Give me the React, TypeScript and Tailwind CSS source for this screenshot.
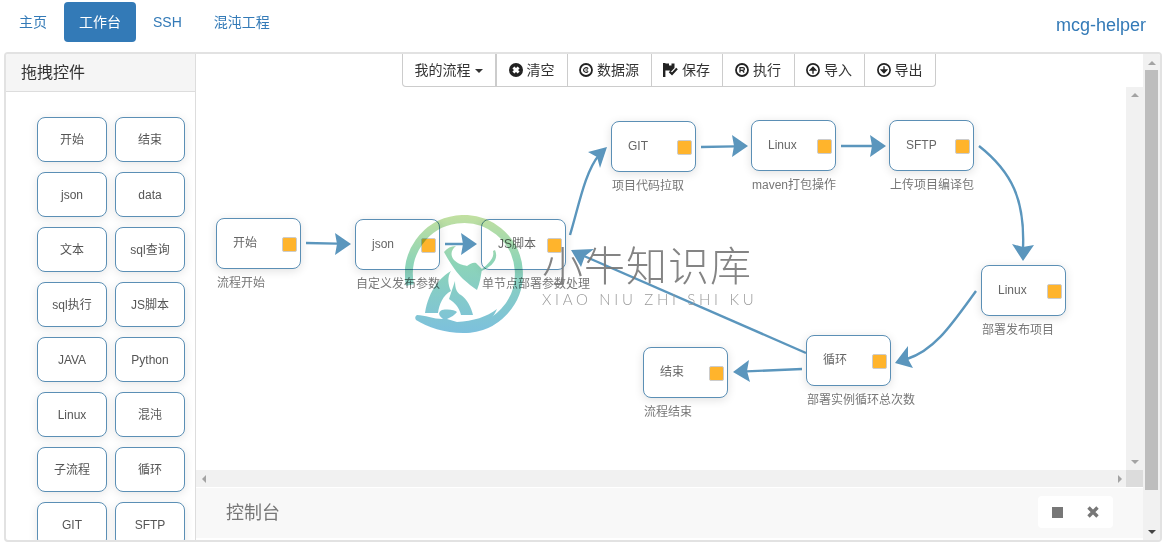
const font = "font-['Liberation_Sans','Noto_Sans_CJK_SC',sans-serif]"

const palette = [
  ["开始", "结束"],
  ["json", "data"],
  ["文本", "sql查询"],
  ["sql执行", "JS脚本"],
  ["JAVA", "Python"],
  ["Linux", "混沌"],
  ["子流程", "循环"],
  ["GIT", "SFTP"],
]

// page coordinates of the flow nodes
const nodes = [
  { x: 216, y: 218, name: "开始", label: "流程开始" },
  { x: 355, y: 219, name: "json", label: "自定义发布参数" },
  { x: 481, y: 219, name: "JS脚本", label: "单节点部署参数处理" },
  { x: 611, y: 121, name: "GIT", label: "项目代码拉取" },
  { x: 751, y: 120, name: "Linux", label: "maven打包操作" },
  { x: 889, y: 120, name: "SFTP", label: "上传项目编译包" },
  { x: 981, y: 265, name: "Linux", label: "部署发布项目" },
  { x: 806, y: 335, name: "循环", label: "部署实例循环总次数" },
  { x: 643, y: 347, name: "结束", label: "流程结束" },
]

function ClearIcon() {
  return (
    <svg width="14" height="14" viewBox="0 0 14 14">
      <circle cx="7" cy="7" r="7" fill="#222" />
      <path d="M4.4 4.4 L9.6 9.6 M9.6 4.4 L4.4 9.6" stroke="#fff" strokeWidth="2.8" />
    </svg>
  )
}

function LetterIcon({ letter }: { letter: string }) {
  return (
    <svg width="14" height="14" viewBox="0 0 14 14">
      <circle cx="7" cy="7" r="6" fill="none" stroke="#222" strokeWidth="1.8" />
      {letter === "c" ? (
        <path d="M9.2 5.6 A2.6 2.2 0 1 0 9.2 8.4 M6.5 7 H9" fill="none" stroke="#222" strokeWidth="1.2" />
      ) : (
        <path d="M5 9.6 V4.6 H8 A1.4 1.4 0 0 1 8 7.4 H5 M7.6 7.4 L9.2 9.6" fill="none" stroke="#222" strokeWidth="1.3" />
      )}
    </svg>
  )
}

function SaveIcon() {
  return (
    <svg width="15" height="14" viewBox="0 0 15 14">
      <path d="M0 0 H2.4 V14 H0 Z M2.4 0.5 H6 V2.5 H8.5 V0.5 H11.5 V5 L8 8.5 L6.5 7.5 H2.4 Z" fill="#222" />
      <path d="M6.5 8.5 L9 11 L14 5.5" fill="none" stroke="#222" strokeWidth="2.2" />
    </svg>
  )
}

function CircleArrow({ up }: { up?: boolean }) {
  return (
    <svg width="14" height="14" viewBox="0 0 14 14">
      <circle cx="7" cy="7" r="6.1" fill="none" stroke="#222" strokeWidth="1.7" />
      <path
        d={up ? "M4.4 7 L7 4.2 L9.6 7 Z M7 6 V10.8" : "M4.4 7 L7 9.8 L9.6 7 Z M7 8 V3.2"}
        fill="#222"
        stroke="#222"
        strokeWidth="1.4"
      />
    </svg>
  )
}

function ToolButton({ icon, text, w }: { icon: React.ReactNode; text: string; w: string }) {
  return (
    <div className={`flex items-center justify-center gap-1 border-l border-[#ccc] ${w}`}>
      {icon}
      <span>{text}</span>
    </div>
  )
}

function Toolbar() {
  return (
    <div className="flex h-[33px] justify-center pl-[16px] pr-[17px]">
      <div className="ml-[-1px] flex rounded-b border border-t-0 border-[#ccc] bg-white text-sm text-[#333]">
        <div className="flex w-[93px] items-center justify-center gap-1 border-r border-[#ccc]">
          我的流程
          <span className="mt-[2px] h-0 w-0 border-x-4 border-t-4 border-x-transparent border-t-[#333]" />
        </div>
        <ToolButton w="w-[71px]" icon={<ClearIcon />} text="清空" />
        <ToolButton w="w-[84px]" icon={<LetterIcon letter="c" />} text="数据源" />
        <ToolButton w="w-[71px]" icon={<SaveIcon />} text="保存" />
        <ToolButton w="w-[72px]" icon={<LetterIcon letter="r" />} text="执行" />
        <ToolButton w="w-[70px]" icon={<CircleArrow up />} text="导入" />
        <ToolButton w="w-[71px]" icon={<CircleArrow />} text="导出" />
      </div>
    </div>
  )
}

function Arrows() {
  const line = { fill: "none", stroke: "#5b96bd", strokeWidth: 2.4 }
  return (
    <svg className="absolute inset-0" width="930" height="383" viewBox="196 87 930 383">
      <g fill="#5b96bd">
        <path d="M306 243 L337 243.6" {...line} />
        <path d="M351 244 L335 233 L337 244 L335 255 Z" />
        <path d="M445 244 L465 244" {...line} />
        <path d="M477 244 L461 233 L463 244 L461 255 Z" />
        <path d="M570 235 C579 205 585 172 599 155" {...line} />
        <path d="M607 147 L588 152 L597 157 L600 168 Z" />
        <path d="M701 147 L735 146.4" {...line} />
        <path d="M748 146 L732 135 L734 146 L732 157 Z" />
        <path d="M841 146 L873 146" {...line} />
        <path d="M886 146 L870 135 L872 146 L870 157 Z" />
        <path d="M979 146 C1012 172 1025 200 1023 248" {...line} />
        <path d="M1023 261 L1034 245 L1023 247 L1012 244 Z" />
        <path d="M976 291 C952 324 935 350 907 359" {...line} />
        <path d="M895 363 L913 368 L908 359 L908 346 Z" />
        <path d="M802 369 L746 371.4" {...line} />
        <path d="M733 372 L750 382 L747 371 L749 360 Z" />
        <path d="M806 353 L584 256" {...line} />
        <path d="M571 250 L581 267 L585 256 L594 249 Z" />
      </g>
    </svg>
  )
}

function Watermark() {
  return (
    <div className="pointer-events-none absolute left-[209px] top-[128px] mix-blend-multiply">
      <svg width="120" height="120" viewBox="0 0 120 120">
        <defs>
          <linearGradient id="ring" gradientUnits="userSpaceOnUse" x1="0" y1="0" x2="0" y2="118">
            <stop offset="0" stopColor="#c2e0a0" />
            <stop offset="0.42" stopColor="#8cd4b8" />
            <stop offset="1" stopColor="#7cc0dd" />
          </linearGradient>
        </defs>
        {/* ring, open at the lower left */}
        <path d="M5 70 A55 55 0 1 1 59 114" fill="none" stroke="url(#ring)" strokeWidth="8" />
        {/* hand */}
        <path
          d="M12 100 C20 100 28 104 38 104 C33 100 33 97 37 95 C44 94 50 95 52 97 C50 100 46 102 42 104 L52 107 C68 106 82 102 92 94 C84 112 70 118 58 118 C40 118 22 112 11 105 Q9 102 12 100 Z"
          fill="url(#ring)"
        />
        {/* bull: head, body, leg, right horn */}
        <path
          d="M39 37 C42 33 46 31 51 31 C46 35 45 40 49 45 C53 49 58 50 62 51 C65 49 68 47 71 48 L77 54 C76 60 75 68 72 75 C67 72 63 68 58 64 C52 58 46 50 39 37 Z"
          fill="url(#ring)"
        />
        <path d="M46 56 C36 62 24 74 20 98 H33 C34 90 38 80 46 76 C43 70 42 62 46 56 Z" fill="url(#ring)" />
        <path d="M50 66 C50 74 52 78 56 80 C62 84 66 92 68 100 H56 C54 92 50 88 44 84 C46 78 48 72 50 66 Z" fill="url(#ring)" />
        <path d="M90 35 C94 44 88 52 72 58 C82 50 90 44 88 36 Z" fill="url(#ring)" />
      </svg>
    </div>
  )
}

function WatermarkText() {
  return (
    <div className="pointer-events-none absolute left-[346px] top-[152px] flex flex-col text-[#777]">
      <div className="whitespace-nowrap text-[41px] leading-[56px] font-light tracking-[1px] opacity-90">小牛知识库</div>
      <div className="mt-[-5px] whitespace-nowrap font-['Lato',sans-serif] text-[15px] leading-[18px] font-light tracking-[3.7px] text-[#999]">
        XIAO NIU ZHI SHI KU
      </div>
    </div>
  )
}

function Node({ x, y, name, label }: { x: number; y: number; name: string; label: string }) {
  return (
    <div className="absolute" style={{ left: x - 196, top: y - 87 }}>
      <div className="flex h-[51px] w-[85px] items-center justify-between rounded-lg border border-[#5b8fb5] bg-white pl-4 pr-[3px] text-xs text-[#666] shadow-[0_2px_10px_rgba(0,0,0,0.12)]">
        <span className="mb-[2px]">{name}</span>
        <span className="mt-[2px] h-[15px] w-[15px] rounded-[2px] border border-[#ccc] bg-[#ffb42c]" />
      </div>
      <div className="ml-[1px] mt-[6px] whitespace-nowrap text-xs text-[#777]">{label}</div>
    </div>
  )
}

function HorizontalBar() {
  return (
    <div className="flex h-[17px] items-center justify-between bg-[#f1f1f1] pl-[6px] pr-[4px]">
      <span className="h-0 w-0 border-y-[4px] border-r-[4px] border-y-transparent border-r-[#a3a3a3]" />
      <span className="h-0 w-0 border-y-[4px] border-l-[4px] border-y-transparent border-l-[#a3a3a3]" />
    </div>
  )
}

export default function App() {
  return (
    <div className={`h-[547px] w-[1167px] overflow-hidden bg-white ${font}`}>
      {/* top nav */}
      <div className="flex h-[52px] items-start justify-between pl-1 pr-[21px] pt-[2px]">
        <div className="flex gap-[2px] text-sm leading-5 text-[#337ab7]">
          <a className="rounded px-[15px] py-[10px]">主页</a>
          <a className="rounded bg-[#337ab7] px-[15px] py-[10px] text-white">工作台</a>
          <a className="rounded px-[15px] py-[10px]">SSH</a>
          <a className="rounded px-[15px] py-[10px]">混沌工程</a>
        </div>
        <div className="mt-[13px] text-lg leading-5 text-[#337ab7]">mcg-helper</div>
      </div>

      <div className="ml-[4px] flex h-[490px] w-[1158px] overflow-hidden rounded border-2 border-[#e2e2e2]">
        {/* palette */}
        <aside className="flex w-[190px] shrink-0 flex-col overflow-hidden border-r border-[#ddd]">
          <div className="h-[38px] shrink-0 border-b border-[#ddd] bg-[#f5f5f5] pl-[15px] text-base leading-[37px] text-[#333]">
            拖拽控件
          </div>
          <div className="grid grid-cols-[70px_70px] gap-x-2 gap-y-[10px] pl-[31px] pt-[25px]">
            {palette.flat().map((item) => (
              <div
                key={item}
                className="flex h-[45px] items-center justify-center rounded-lg border border-[#5b8fb5] bg-white text-xs text-[#555] shadow-[0_2px_10px_rgba(0,0,0,0.1)]"
              >
                {item}
              </div>
            ))}
          </div>
        </aside>

        {/* work area */}
        <div className="flex min-w-0 flex-1">
          <div className="flex min-w-0 flex-1 flex-col">
            <Toolbar />
            <div className="flex h-[383px] shrink-0">
              <div className="relative min-w-0 flex-1 overflow-hidden">
                <Arrows />
                {nodes.map((n) => (
                  <Node key={n.x} {...n} />
                ))}
                <Watermark />
                <WatermarkText />
              </div>
              <div className="flex w-[17px] shrink-0 flex-col items-center justify-between bg-[#f1f1f1] py-[6px]">
                <span className="h-0 w-0 border-x-[4px] border-b-[4px] border-x-transparent border-b-[#a3a3a3]" />
                <span className="h-0 w-0 border-x-[4px] border-t-[4px] border-x-transparent border-t-[#a3a3a3]" />
              </div>
            </div>
            <div className="flex shrink-0">
              <div className="min-w-0 flex-1">
                <HorizontalBar />
              </div>
              <div className="h-[17px] w-[17px] bg-[#dcdcdc]" />
            </div>
            <div className="mt-[1px] flex h-[50px] shrink-0 items-start justify-between bg-[#f8f8f8] pl-[30px] pr-[30px] pt-[8px]">
              <span className="text-lg leading-[34px] text-[#777]">控制台</span>
              <div className="flex h-[32px] w-[75px] items-center justify-center gap-6 rounded bg-white">
                <span className="h-[11px] w-[11px] bg-[#777]" />
                <svg width="12" height="12" viewBox="0 0 12 12">
                  <path d="M1.5 1.5 L10.5 10.5 M10.5 1.5 L1.5 10.5" stroke="#777" strokeWidth="3.4" />
                </svg>
              </div>
            </div>
          </div>

          {/* outer scrollbar */}
          <div className="flex w-[17px] shrink-0 flex-col items-center bg-[#f1f1f1]">
            <span className="mt-[7px] h-0 w-0 border-x-[4px] border-b-[4px] border-x-transparent border-b-[#a3a3a3]" />
            <div className="mt-[5px] h-[420px] w-[13px] bg-[#bdbdbd]" />
            <span className="mt-[40px] h-0 w-0 border-x-[4px] border-t-[4px] border-x-transparent border-t-[#444]" />
          </div>
        </div>
      </div>
    </div>
  )
}
